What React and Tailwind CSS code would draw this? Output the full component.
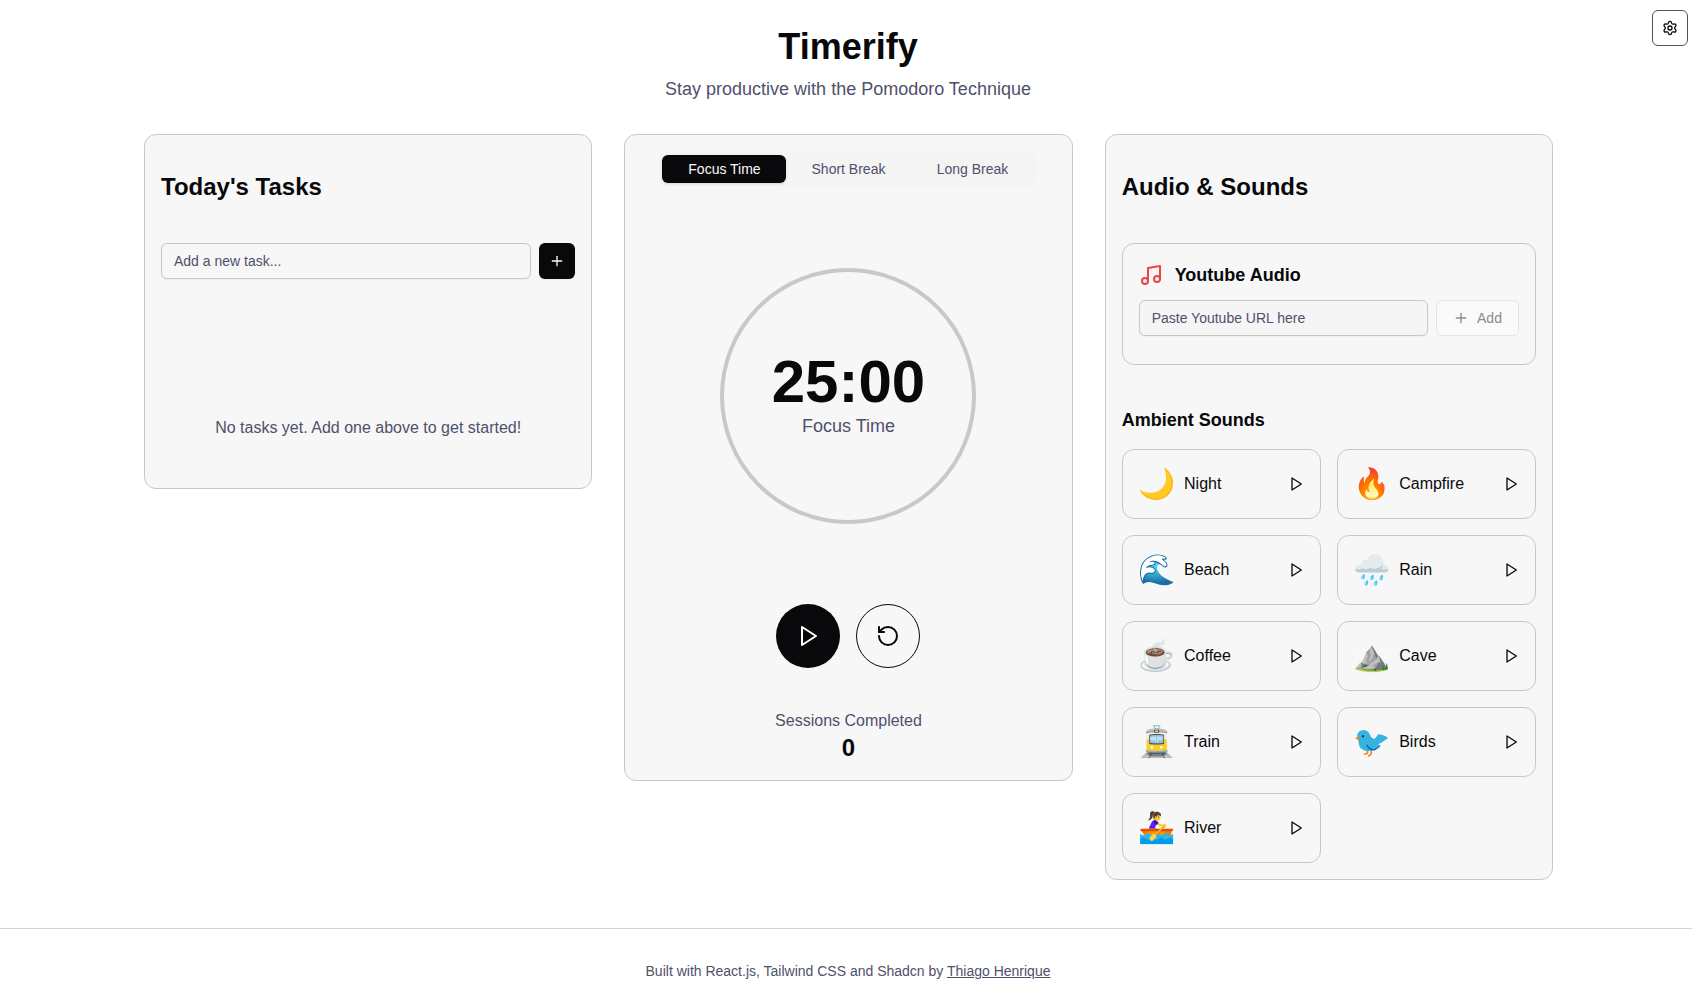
import React from "react";
import { RotateCcw, Plus, Music, Settings } from "lucide-react";

const sounds = [
  ["🌙", "Night"], ["🔥", "Campfire"], ["🌊", "Beach"], ["🌧️", "Rain"], ["☕", "Coffee"],
  ["⛰️", "Cave"], ["🚊", "Train"], ["🐦", "Birds"], ["🚣‍♀️", "River"],
];

function PlayIcon({ size, className }) {
  return (
    <svg width={size} height={size} viewBox="0 0 24 24" fill="none" stroke="currentColor" strokeWidth="2" strokeLinecap="round" strokeLinejoin="round" className={className}>
      <polygon points="6 3 20 12 6 21 6 3" />
    </svg>
  );
}

function Sound({ emoji, name }) {
  return (
    <div className="h-[70px] rounded-xl border border-[#c8c8c8] px-4 flex items-center justify-between">
      <div className="flex items-center gap-2">
        <span className="text-[30px] leading-9" style={{ fontFamily: '"Noto Color Emoji", sans-serif' }}>{emoji}</span>
        <span className="text-base leading-6 text-[#09090b]">{name}</span>
      </div>
      <PlayIcon size={16} className="text-[#09090b]" />
    </div>
  );
}

export default function App() {
  return (
    <div className="relative min-h-screen bg-white text-[#09090b]" style={{ fontFamily: '"Liberation Sans", Arial, sans-serif' }}>
      <button className="absolute top-[10px] right-[4px] w-9 h-9 rounded-md border border-[#555] bg-white flex items-center justify-center">
        <Settings size={16} strokeWidth={2} />
      </button>
      <header className="pt-[27px] pl-1 text-center">
        <h1 className="text-4xl font-bold leading-10 text-[#09090b]">Timerify</h1>
        <p className="mt-2 text-lg leading-7 text-[#50506b]">Stay productive with the Pomodoro Technique</p>
      </header>
      <main className="ml-[144px] w-[1409px] mt-[31px] grid grid-cols-3 gap-8 items-start">
        <section className="h-[355px] rounded-xl border border-[#c8c8c8] bg-[#f7f7f7] px-4 pt-9">
          <h2 className="text-2xl font-bold leading-8">Today's Tasks</h2>
          <div className="mt-10 flex gap-2">
            <div className="flex-1 h-9 rounded-md border border-[#c8c8c8] bg-[#f7f7f7] px-3 flex items-center text-sm text-[#50506b] shadow-xs">Add a new task...</div>
            <button className="w-9 h-9 rounded-md bg-[#09090b] flex items-center justify-center text-[#fafafa] shadow-xs">
              <Plus size={16} />
            </button>
          </div>
          <p className="mt-[137px] text-center text-base leading-6 text-[#50506b]">No tasks yet. Add one above to get started!</p>
        </section>

        <section className="h-[647px] rounded-xl border border-[#c8c8c8] bg-[#f7f7f7] flex flex-col items-center">
          <div className="mt-[17px] w-[378px] h-[34px] rounded-lg bg-[#f4f4f5] p-[3px] grid grid-cols-3 text-sm">
            <div className="rounded-md bg-[#09090b] text-[#fafafa] flex items-center justify-center shadow-sm">Focus Time</div>
            <div className="flex items-center justify-center text-[#50506b]">Short Break</div>
            <div className="flex items-center justify-center text-[#50506b]">Long Break</div>
          </div>
          <div className="mt-[82px] w-64 h-64 rounded-full border-4 border-[#c8c8c8] flex flex-col items-center justify-center">
            <div className="text-6xl font-bold leading-[60px]">25:00</div>
            <div className="text-lg leading-7 text-[#50506b]">Focus Time</div>
          </div>
          <div className="mt-20 flex gap-4">
            <button className="w-16 h-16 rounded-full bg-[#09090b] text-white flex items-center justify-center">
              <PlayIcon size={24} />
            </button>
            <button className="w-16 h-16 rounded-full border border-[#09090b] flex items-center justify-center">
              <RotateCcw size={24} strokeWidth={2} />
            </button>
          </div>
          <div className="mt-[41px] text-center">
            <div className="text-base leading-6 text-[#50506b]">Sessions Completed</div>
            <div className="text-2xl font-bold leading-[30px]">0</div>
          </div>
        </section>

        <section className="rounded-xl border border-[#c8c8c8] bg-[#f7f7f7] px-4 pt-9 pb-4">
          <h2 className="text-2xl font-bold leading-8">Audio &amp; Sounds</h2>
          <div className="mt-10 h-[122px] rounded-xl border border-[#c8c8c8] px-4 pt-[19px]">
            <div className="flex items-center gap-3 h-6">
              <Music size={24} strokeWidth={2} className="text-[#ef4444]" />
              <h3 className="text-lg font-bold leading-7">Youtube Audio</h3>
            </div>
            <div className="mt-[13px] flex gap-2">
              <div className="flex-1 h-9 rounded-md border border-[#c8c8c8] bg-[#f5f5f5] px-3 flex items-center text-sm text-[#50506b] shadow-xs">Paste Youtube URL here</div>
              <button className="w-[83px] h-9 rounded-md border border-[#e4e4e7] bg-[#fafafa] flex items-center justify-center gap-2 text-sm text-[#8a8a8c]">
                <Plus size={16} /> Add
              </button>
            </div>
          </div>
          <h3 className="mt-[41px] text-lg font-bold leading-7">Ambient Sounds</h3>
          <div className="mt-[15px] grid grid-cols-2 gap-4">
            {sounds.map(([e, n]) => <Sound key={n} emoji={e} name={n} />)}
          </div>
        </section>
      </main>
      <footer className="mt-12 border-t border-[#d4d4d4] pt-8 pb-2 pl-1 text-center text-sm leading-5 text-[#50506b]">
        Built with React.js, Tailwind CSS and Shadcn by <a className="underline">Thiago Henrique</a>
      </footer>
    </div>
  );
}
